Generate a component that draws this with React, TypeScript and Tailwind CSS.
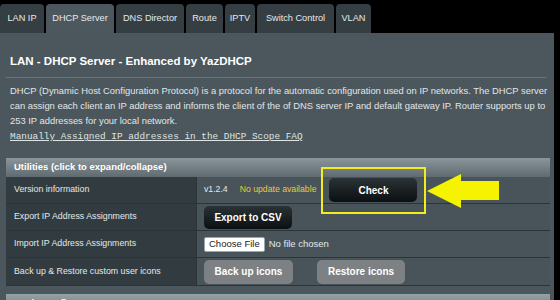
import React from 'react';

const tabs = [
  { label: 'LAN IP', w: 'w-[44px]' },
  { label: 'DHCP Server', w: 'w-[68px]', active: true },
  { label: 'DNS Director', w: 'w-[68px]' },
  { label: 'Route', w: 'w-[37px]' },
  { label: 'IPTV', w: 'w-[30px]' },
  { label: 'Switch Control', w: 'w-[77px]' },
  { label: 'VLAN', w: 'w-[35px]' },
];

function Row({ label, children, last }: { label: string; children: React.ReactNode; last?: boolean }) {
  return (
    <div className={`flex ${last ? 'h-[27px]' : 'h-[27px] border-b border-[#2b3437]'}`}>
      <div className="w-[191px] shrink-0 bg-[#323c40] border-r border-[#2b3437] flex items-center pl-[8px] text-[8.8px] text-[#e4e8e9]">
        {label}
      </div>
      <div className="flex-1 bg-[#485459] flex items-center pl-[7px] text-[8.7px] text-[#e4e8e9]">
        {children}
      </div>
    </div>
  );
}

export default function App() {
  return (
    <div className="w-[560px] h-[300px] bg-black overflow-hidden font-['Liberation_Sans',Arial,sans-serif]">
      {/* Tabs */}
      <div className="flex items-end gap-[2px] h-[33px] pt-[4px]">
        {tabs.map((t) => (
          <div
            key={t.label}
            className={`${t.w} h-[29px] rounded-t-[4px] flex items-center justify-center text-[9.2px] text-[#e6e9ea] ${
              t.active ? 'bg-[#4c585d]' : 'bg-[#353e42]'
            }`}
          >
            {t.label}
          </div>
        ))}
      </div>

      {/* Panel */}
      <div className="w-[554px] bg-[#4b575c] px-[6px]">
        <div className="pl-[4px] pt-[20px] h-[44px] text-[11.5px] font-bold text-white">
          LAN - DHCP Server - Enhanced by YazDHCP
        </div>
        <div className="h-[1px] bg-[#6a767a] mr-[2px]" />
        <div className="pl-[4px] pt-[5px] text-[9.4px] leading-[15px] text-[#e2e6e7] whitespace-nowrap">
          DHCP (Dynamic Host Configuration Protocol) is a protocol for the automatic configuration used on IP networks. The DHCP server
          <br />
          can assign each client an IP address and informs the client of the of DNS server IP and default gateway IP. Router supports up to
          <br />
          253 IP addresses for your local network.
        </div>
        <div className="pl-[4px] pt-[1px] h-[30px] font-['Liberation_Mono',monospace] text-[9.4px] leading-[15px] text-[#dfe3e4] underline">
          Manually Assigned IP addresses in the DHCP Scope FAQ
        </div>

        {/* Utilities table */}
        <div className="w-[544px]">
          <div className="h-[19px] bg-gradient-to-b from-[#8a969a] to-[#5f6b70] flex items-center pl-[8px] text-[9.5px] font-bold text-white">
            Utilities (click to expand/collapse)
          </div>
          <Row label="Version information">
            <span className="mr-[12px]">v1.2.4</span>
            <span className="text-[#e9c93a]">No update available</span>
            <div className="relative ml-[13px]">
              <button className="w-[88px] h-[24px] rounded-[5px] bg-gradient-to-b from-[#2b3336] to-[#0c1012] text-white text-[10px] font-bold">
                Check
              </button>
              <div className="absolute left-[-8px] top-[-11px] w-[105px] h-[47px] border-[2px] border-[#f2ee1c]" />
              <svg className="absolute left-[98px] top-[-5px]" width="74" height="36" viewBox="0 0 74 36">
                <polygon points="0,18 34,1 34,8 72,8 72,27 34,27 34,35" fill="#f6f300" />
              </svg>
            </div>
          </Row>
          <Row label="Export IP Address Assignments">
            <button className="w-[88px] h-[23px] rounded-[5px] bg-gradient-to-b from-[#2b3336] to-[#0c1012] text-white text-[10px] font-bold">
              Export to CSV
            </button>
          </Row>
          <Row label="Import IP Address Assignments">
            <span className="h-[15px] px-[4px] bg-white border border-[#9aa] rounded-[2px] text-[#222] text-[9.5px] flex items-center">
              Choose File
            </span>
            <span className="ml-[4px] text-[9.5px]">No file chosen</span>
          </Row>
          <Row label="Back up & Restore custom user icons" last>
            <button className="w-[89px] h-[24px] rounded-[5px] bg-[#7e8183] text-white text-[10px] font-bold">
              Back up icons
            </button>
            <button className="ml-[24px] w-[88px] h-[24px] rounded-[5px] bg-[#7e8183] text-white text-[10px] font-bold">
              Restore icons
            </button>
          </Row>
          <div className="h-[1px] bg-[#2b3437]" />
          <div className="h-[8px]" />
          <div className="h-[19px] bg-gradient-to-b from-[#95a1a5] to-[#6c787d] flex items-center pl-[8px] text-[9.5px] font-bold text-white">
            Basic Config
          </div>
        </div>
      </div>
    </div>
  );
}
